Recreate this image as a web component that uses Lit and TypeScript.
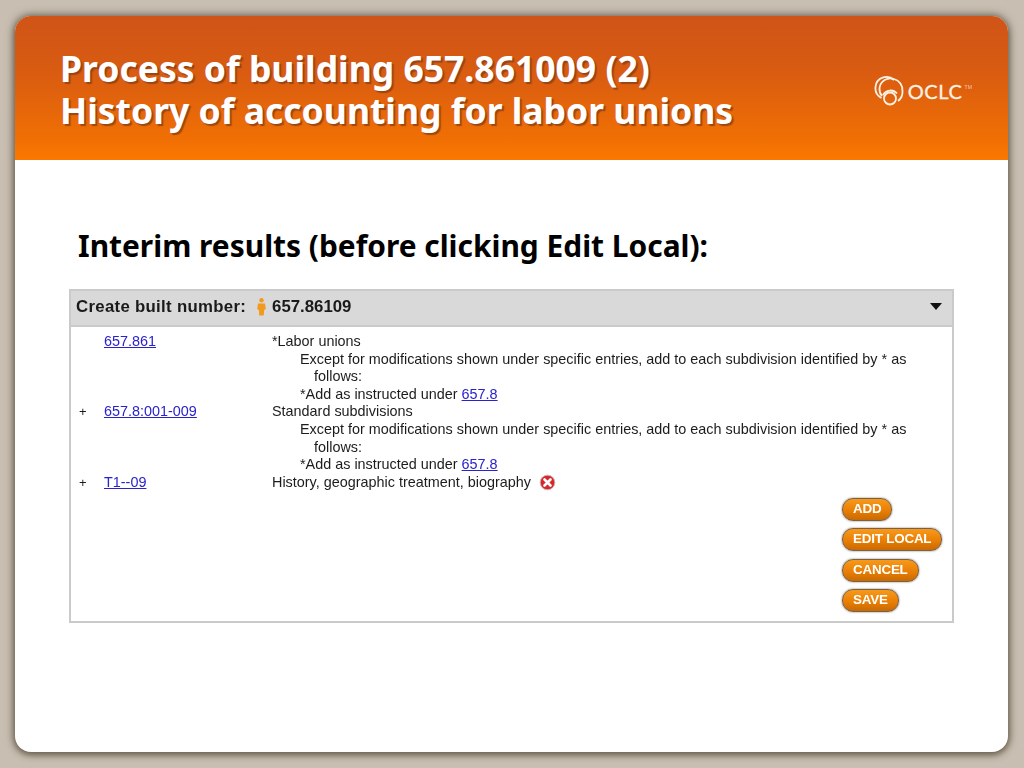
import { LitElement, html, css } from "lit";
import { customElement } from "lit/decorators.js";

const INDENT_RULE = "Except for modifications shown under specific entries, add to each subdivision identified by * as";

@customElement("app-root")
export class AppRoot extends LitElement {
  static styles = css`
    :host { display: block; width: 1024px; height: 768px; background: #c8bfb2; overflow: hidden; font-family: "Noto Sans", sans-serif; }
    .slide { width: 993px; height: 736px; margin: 16px 0 0 15px; background: #fff; border-radius: 16px; box-shadow: 0 0 8px 1px rgba(85,74,58,.8), 0 3px 6px rgba(85,74,58,.55); overflow: hidden; display: flex; flex-direction: column; }
    .head { height: 144px; box-sizing: border-box; padding: 31px 36px 0 45px; display: flex; justify-content: space-between; align-items: flex-start; background: linear-gradient(#cf5417, #d95c11 40%, #f06f04 85%, #fb7800); }
    h1 { margin: 0; color: #fff; font-size: 35.5px; line-height: 42px; font-weight: 700; white-space: nowrap; text-shadow: 2px 2px 1px rgba(130,60,25,.75); }
    .logo { display: flex; align-items: center; margin-top: 28px; color: #fdf1e6; }
    .logo svg { display: block; }
    .oclc { font-family: Lato, sans-serif; font-size: 20px; letter-spacing: .6px; margin-left: 4px; line-height: 1; -webkit-text-stroke: .3px currentColor; }
    .tm { font-family: "Liberation Sans", sans-serif; font-size: 5px; align-self: flex-start; margin: 9px 0 0 2px; opacity: .7; letter-spacing: .2px; }
    .body { padding: 68px 54px 0 54px; }
    h2 { margin: 0 0 25px 9px; color: #000; font-size: 29.9px; line-height: 36px; font-weight: 700; white-space: nowrap; }
    .panel { width: 885px; height: 334px; box-sizing: border-box; border: 2px solid #cacaca; background: #fff; filter: blur(.35px); font-family: "Liberation Sans", sans-serif; color: #1c1c1c; }
    .bar { height: 36px; box-sizing: border-box; padding: 0 10px 3px 5px; background: #d9d9d9; border-bottom: 2px solid #cacaca; display: flex; align-items: center; font-size: 16.8px; font-weight: 700; color: #1a1a1a; }
    .bar .lbl { letter-spacing: .3px; }
    .bar svg { margin: 1px 6px 0 11px; }
    .caret { margin-left: auto; width: 0; height: 0; border-left: 6.5px solid transparent; border-right: 6.5px solid transparent; border-top: 7px solid #111; }
    .rows { padding: 6px 8px 0 8px; display: grid; grid-template-columns: 25px 168px 1fr; font-size: 14.4px; line-height: 17.6px; }
    .rows a { color: #2a22cc; text-decoration: underline; }
    .plus { font-size: 13px; }
    .i1 { padding-left: 28px; }
    .i2 { padding-left: 42px; }
    .err { display: inline-block; vertical-align: -4px; margin-left: 4px; }
    .btns { display: flex; flex-direction: column; align-items: flex-start; gap: 7.5px; margin: 6.5px 0 0 771px; }
    .btn { height: 23px; box-sizing: border-box; padding: 0 10px; border-radius: 11px; border: 1.5px solid #76624c; background: linear-gradient(#f79a1c, #e97f04 55%, #c96a02); color: #fff; font-size: 13.4px; font-weight: 700; line-height: 20px; box-shadow: 0 0 2px rgba(60,40,20,.7); white-space: nowrap; letter-spacing: -.2px; }
  `;

  render() {
    return html`
      <div class="slide">
        <header class="head">
          <h1>Process of building 657.861009 (2)<br />History of accounting for labor unions</h1>
          <div class="logo">
            <svg width="30" height="31" viewBox="0 0 30 31" fill="none" stroke="currentColor" stroke-width="1.8">
              <path d="M20 5 A 11 11 0 0 0 1.5 12 A 11 11 0 0 0 7.5 23" />
              <path d="M8 21 A 11 11 0 0 1 5.5 13 A 11 11 0 0 1 20 4 A 11.5 11.5 0 0 1 28.5 16 A 11.5 11.5 0 0 1 24 26" />
              <path d="M9 20 A 8.5 8.5 0 0 1 23 18.5" />
              <circle cx="16" cy="23.5" r="6" />
            </svg>
            <span class="oclc">OCLC</span><span class="tm">TM</span>
          </div>
        </header>
        <main class="body">
          <h2>Interim results (before clicking Edit Local):</h2>
          <section class="panel">
            <div class="bar">
              <span class="lbl">Create built number:</span>
              <svg width="9" height="18" viewBox="0 0 9 18" fill="#f09a1e"><circle cx="4.5" cy="2.3" r="2.2" /><path d="M1 5.5h7l.8 5.5-1.6 1-.4 5.5h-4.6l-.4-5.5-1.6-1z" /></svg>
              <span class="num">657.86109</span>
              <span class="caret"></span>
            </div>
            <div class="rows">
              <span></span><span><a href="#">657.861</a></span><span>*Labor unions</span>
              <span></span><span></span><span class="i1">${INDENT_RULE}</span>
              <span></span><span></span><span class="i2">follows:</span>
              <span></span><span></span><span class="i1">*Add as instructed under <a href="#">657.8</a></span>
              <span class="plus">+</span><span><a href="#">657.8:001-009</a></span><span>Standard subdivisions</span>
              <span></span><span></span><span class="i1">${INDENT_RULE}</span>
              <span></span><span></span><span class="i2">follows:</span>
              <span></span><span></span><span class="i1">*Add as instructed under <a href="#">657.8</a></span>
              <span class="plus">+</span><span><a href="#">T1--09</a></span>
              <span>History, geographic treatment, biography
                <svg class="err" width="17" height="17" viewBox="0 0 17 17"><circle cx="8.5" cy="8.5" r="7.3" fill="#d8262a" stroke="#c9b5b5" stroke-width="1" /><path d="M5.5 5.5l6 6M11.5 5.5l-6 6" stroke="#fff" stroke-width="2.6" stroke-linecap="round" /></svg>
              </span>
            </div>
            <div class="btns">
              <span class="btn">ADD</span>
              <span class="btn">EDIT LOCAL</span>
              <span class="btn">CANCEL</span>
              <span class="btn">SAVE</span>
            </div>
          </section>
        </main>
      </div>
    `;
  }
}
